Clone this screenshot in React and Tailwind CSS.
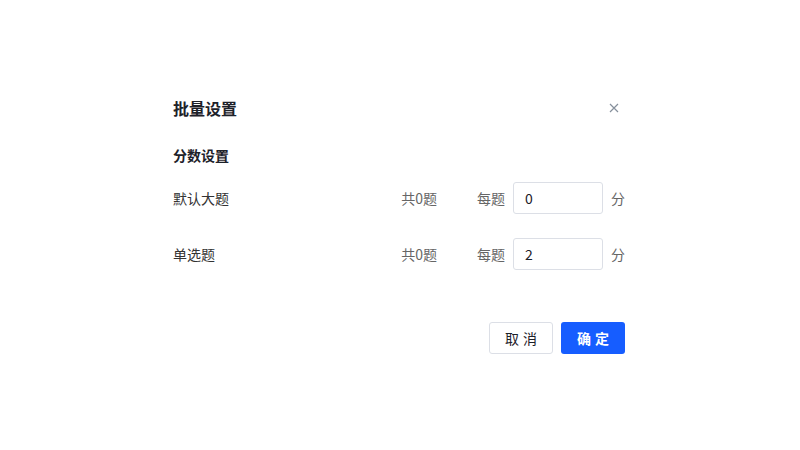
import React from 'react'

const rows = [
    { name: '默认大题', count: 0, score: '0' },
    { name: '单选题', count: 0, score: '2' },
]

const App = () => {
    return (
        <div
            className="w-[800px] h-[450px] bg-white pt-[96px]"
            style={{ fontFamily: '"Noto Sans CJK SC", "Noto Sans", sans-serif' }}
        >
            <div className="w-[452px] ml-[173px] flex flex-col">
                <div className="h-6 flex items-center justify-between">
                    <div className="text-base font-bold text-[#1d2129]">批量设置</div>
                    <button className="w-4 h-4 mr-[3px] flex items-center justify-center text-[#86909c]">
                        <svg width="10" height="10" viewBox="0 0 10 10" fill="none">
                            <path d="M1 1L9 9M9 1L1 9" stroke="currentColor" strokeWidth="1.2" />
                        </svg>
                    </button>
                </div>
                <div className="mt-[25px] h-5 flex items-center text-sm font-bold text-[#1d2129]">
                    分数设置
                </div>
                <div className="mt-[17px] flex flex-col gap-6">
                    {rows.map((row) => (
                        <div key={row.name} className="h-8 flex items-center text-sm">
                            <div className="flex-1 text-[#333]">{row.name}</div>
                            <div className="text-[#666]">共{row.count}题</div>
                            <div className="ml-10 text-[#666]">每题</div>
                            <input
                                className="ml-2 w-[90px] h-8 px-[11px] border border-[#dcdfe6] rounded-[3px] text-sm text-[#1d2129] outline-none"
                                defaultValue={row.score}
                            />
                            <div className="ml-2 text-[#666]">分</div>
                        </div>
                    ))}
                </div>
                <div className="mt-[52px] flex justify-end gap-2">
                    <button className="w-16 h-8 border border-[#dcdfe6] rounded-[3px] bg-white text-sm text-[#1d2129] tracking-[4px] pl-1">
                        取消
                    </button>
                    <button className="w-16 h-8 rounded-[3px] bg-[#165dff] text-sm font-bold text-white tracking-[4px] pl-1">
                        确定
                    </button>
                </div>
            </div>
        </div>
    )
}

export default App
